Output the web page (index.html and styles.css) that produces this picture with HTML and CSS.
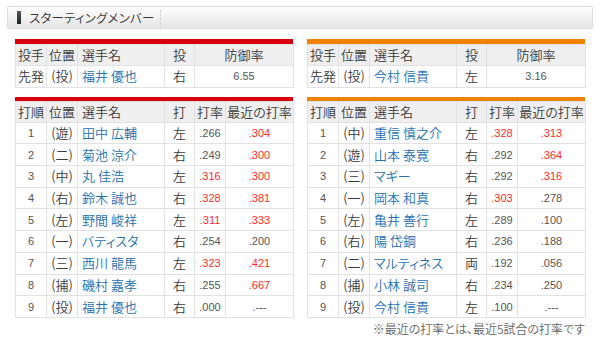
FILE: index.html
```html
<!DOCTYPE html>
<html lang="ja">
<head>
<meta charset="utf-8">
<title>スターティングメンバー</title>
<link rel="stylesheet" href="styles.css">
</head>
<body>
<div class="page">
  <div class="title">
    <span class="title-mark"></span>
    <span class="title-text">スターティングメンバー</span>
  </div>
  <div class="teams">
    <div class="team home">
      <div class="table-wrap">
        <table class="pitcher">
          <colgroup><col class="c1"><col class="c2"><col class="c3"><col class="c4"><col class="c56"></colgroup>
          <tr class="head"><th>投手</th><th>位置</th><th class="name">選手名</th><th>投</th><th>防御率</th></tr>
          <tr><td>先発</td><td>(投)</td><td class="name"><a>福井 優也</a></td><td>右</td><td class="num">6.55</td></tr>
        </table>
      </div>
      <div class="table-wrap">
        <table class="lineup">
          <colgroup><col class="c1"><col class="c2"><col class="c3"><col class="c4"><col class="c5"><col class="c6"></colgroup>
          <tr class="head"><th>打順</th><th>位置</th><th class="name">選手名</th><th>打</th><th>打率</th><th>最近の打率</th></tr>
          <tr><td class="num">1</td><td>(遊)</td><td class="name"><a>田中 広輔</a></td><td>左</td><td class="num">.266</td><td class="num hi">.304</td></tr>
          <tr><td class="num">2</td><td>(二)</td><td class="name"><a>菊池 涼介</a></td><td>右</td><td class="num">.249</td><td class="num hi">.300</td></tr>
          <tr><td class="num">3</td><td>(中)</td><td class="name"><a>丸 佳浩</a></td><td>左</td><td class="num hi">.316</td><td class="num hi">.300</td></tr>
          <tr><td class="num">4</td><td>(右)</td><td class="name"><a>鈴木 誠也</a></td><td>右</td><td class="num hi">.328</td><td class="num hi">.381</td></tr>
          <tr><td class="num">5</td><td>(左)</td><td class="name"><a>野間 峻祥</a></td><td>左</td><td class="num hi">.311</td><td class="num hi">.333</td></tr>
          <tr><td class="num">6</td><td>(一)</td><td class="name"><a>バティスタ</a></td><td>右</td><td class="num">.254</td><td class="num">.200</td></tr>
          <tr><td class="num">7</td><td>(三)</td><td class="name"><a>西川 龍馬</a></td><td>左</td><td class="num hi">.323</td><td class="num hi">.421</td></tr>
          <tr><td class="num">8</td><td>(捕)</td><td class="name"><a>磯村 嘉孝</a></td><td>右</td><td class="num">.255</td><td class="num hi">.667</td></tr>
          <tr><td class="num">9</td><td>(投)</td><td class="name"><a>福井 優也</a></td><td>右</td><td class="num">.000</td><td class="num">.---</td></tr>
        </table>
      </div>
    </div>
    <div class="team away">
      <div class="table-wrap">
        <table class="pitcher">
          <colgroup><col class="c1"><col class="c2"><col class="c3"><col class="c4"><col class="c56"></colgroup>
          <tr class="head"><th>投手</th><th>位置</th><th class="name">選手名</th><th>投</th><th>防御率</th></tr>
          <tr><td>先発</td><td>(投)</td><td class="name"><a>今村 信貴</a></td><td>左</td><td class="num">3.16</td></tr>
        </table>
      </div>
      <div class="table-wrap">
        <table class="lineup">
          <colgroup><col class="c1"><col class="c2"><col class="c3"><col class="c4"><col class="c5"><col class="c6"></colgroup>
          <tr class="head"><th>打順</th><th>位置</th><th class="name">選手名</th><th>打</th><th>打率</th><th>最近の打率</th></tr>
          <tr><td class="num">1</td><td>(中)</td><td class="name"><a>重信 慎之介</a></td><td>左</td><td class="num hi">.328</td><td class="num hi">.313</td></tr>
          <tr><td class="num">2</td><td>(遊)</td><td class="name"><a>山本 泰寛</a></td><td>右</td><td class="num">.292</td><td class="num hi">.364</td></tr>
          <tr><td class="num">3</td><td>(三)</td><td class="name"><a>マギー</a></td><td>右</td><td class="num">.292</td><td class="num hi">.316</td></tr>
          <tr><td class="num">4</td><td>(一)</td><td class="name"><a>岡本 和真</a></td><td>右</td><td class="num hi">.303</td><td class="num">.278</td></tr>
          <tr><td class="num">5</td><td>(左)</td><td class="name"><a>亀井 善行</a></td><td>左</td><td class="num">.289</td><td class="num">.100</td></tr>
          <tr><td class="num">6</td><td>(右)</td><td class="name"><a>陽 岱鋼</a></td><td>右</td><td class="num">.236</td><td class="num">.188</td></tr>
          <tr><td class="num">7</td><td>(二)</td><td class="name"><a>マルティネス</a></td><td>両</td><td class="num">.192</td><td class="num">.056</td></tr>
          <tr><td class="num">8</td><td>(捕)</td><td class="name"><a>小林 誠司</a></td><td>右</td><td class="num">.234</td><td class="num">.250</td></tr>
          <tr><td class="num">9</td><td>(投)</td><td class="name"><a>今村 信貴</a></td><td>左</td><td class="num">.100</td><td class="num">.---</td></tr>
        </table>
      </div>
    </div>
  </div>
  <p class="note">※最近の打率とは、最近5試合の打率です</p>
</div>
</body>
</html>
```

FILE: styles.css
```css
html, body {
  margin: 0;
  padding: 0;
  background: #fff;
}

body {
  font-family: "Noto Sans CJK JP", sans-serif;
  font-feature-settings: "palt";
  font-weight: 350;
  color: #3a3a3a;
  font-size: 13px;
}

.page {
  padding: 6px 7px 0 7px;
}

.title {
  width: 584px;
  height: 21px;
  border: 1px solid #dcdcdc;
  border-radius: 2px;
  background: linear-gradient(#fdfdfd 0%, #f2f2f2 50%, #e5e5e5 100%);
  display: flex;
  align-items: center;
}

.title-mark {
  width: 4px;
  height: 13px;
  margin-left: 9px;
  background: linear-gradient(#555, #222);
}

.title-text {
  margin-left: 8px;
  padding-right: 5px;
  font-size: 12.5px;
  letter-spacing: 0.2px;
  color: #333;
  line-height: 16px;
  border-right: 1px dotted #c8c8c8;
}

.teams {
  display: flex;
  gap: 14px;
  padding-left: 8px;
  margin-top: 10px;
}

.team {
  width: 278px;
  display: flex;
  flex-direction: column;
  gap: 9px;
}

.home .table-wrap {
  border-top: 5px solid #d9000d;
}

.away .table-wrap {
  border-top: 5px solid #f08200;
}

.team .table-wrap + .table-wrap {
  border-top-width: 4px;
}

table {
  width: 278px;
  border-collapse: collapse;
  table-layout: fixed;
}

col.c1 { width: 31px; }
col.c2 { width: 31px; }
col.c3 { width: 87px; }
col.c4 { width: 30px; }
col.c5 { width: 31px; }
col.c6 { width: 68px; }
col.c56 { width: 99px; }

th, td {
  border: 1px solid #e2e2e2;
  padding: 0;
  text-align: center;
  font-weight: inherit;
  white-space: nowrap;
  line-height: 18px;
}

tr {
  height: 21.7px;
}

tr.head {
  height: 21px;
  background: #efefef;
}

.name {
  text-align: left;
  padding-left: 4px;
}

.name a {
  color: #2470b2;
  text-decoration: none;
}

.num {
  font-family: "Liberation Sans", Arial, sans-serif;
  font-weight: normal;
  font-size: 11px;
  color: #555;
}

.num.hi {
  color: #ff2b2b;
}

.note {
  margin: 3px 0 0 0;
  padding-right: 8px;
  text-align: right;
  font-size: 12px;
  color: #666;
  line-height: 16px;
}
```
